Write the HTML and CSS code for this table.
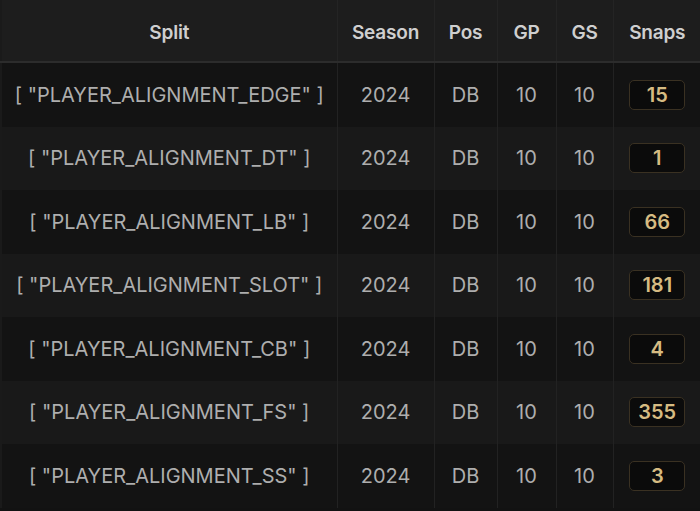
FILE: index.html
```html
<!DOCTYPE html>
<html>
<head>
<meta charset="utf-8">
<link rel="stylesheet" href="styles.css">
</head>
<body>
<table class="stats">
  <colgroup>
    <col class="c-split"><col class="c-season"><col class="c-pos"><col class="c-gp"><col class="c-gs"><col class="c-snaps">
  </colgroup>
  <thead>
    <tr><th>Split</th><th>Season</th><th>Pos</th><th>GP</th><th>GS</th><th>Snaps</th></tr>
  </thead>
  <tbody>
    <tr><td>[ "PLAYER_ALIGNMENT_EDGE" ]</td><td>2024</td><td>DB</td><td>10</td><td>10</td><td><span class="badge">15</span></td></tr>
    <tr><td>[ "PLAYER_ALIGNMENT_DT" ]</td><td>2024</td><td>DB</td><td>10</td><td>10</td><td><span class="badge">1</span></td></tr>
    <tr><td>[ "PLAYER_ALIGNMENT_LB" ]</td><td>2024</td><td>DB</td><td>10</td><td>10</td><td><span class="badge">66</span></td></tr>
    <tr><td>[ "PLAYER_ALIGNMENT_SLOT" ]</td><td>2024</td><td>DB</td><td>10</td><td>10</td><td><span class="badge">181</span></td></tr>
    <tr><td>[ "PLAYER_ALIGNMENT_CB" ]</td><td>2024</td><td>DB</td><td>10</td><td>10</td><td><span class="badge">4</span></td></tr>
    <tr><td>[ "PLAYER_ALIGNMENT_FS" ]</td><td>2024</td><td>DB</td><td>10</td><td>10</td><td><span class="badge">355</span></td></tr>
    <tr><td>[ "PLAYER_ALIGNMENT_SS" ]</td><td>2024</td><td>DB</td><td>10</td><td>10</td><td><span class="badge">3</span></td></tr>
  </tbody>
</table>
</body>
</html>
```

FILE: styles.css
```css
html, body {
  margin: 0;
  padding: 0;
  background: #121212;
}
.stats {
  width: 700px;
  border-collapse: collapse;
  table-layout: fixed;
  font-family: Inter, "Noto Sans", sans-serif;
  color: #aeaeae;
}
.c-split { width: 336px; }
.c-season { width: 97px; }
.c-pos { width: 63px; }
.c-gp { width: 59px; }
.c-gs { width: 57px; }
.c-snaps { width: 88px; }
.stats th {
  height: 58px;
  padding: 3px 0 0;
  background: #1d1d1d;
  color: #cfcfcf;
  font-size: 19px;
  font-weight: 600;
  letter-spacing: -0.2px;
  border-bottom: 2px solid #2c2c2c;
  border-right: 1px solid #242424;
}
.stats td {
  height: 63.5px;
  padding: 0;
  text-align: center;
  font-size: 20px;
  border-right: 1px solid #222;
}
.stats th:first-child, .stats td:first-child { border-left: 2px solid #1a1a1a; }
.stats th:last-child, .stats td:last-child { border-right: none; }
.stats tbody tr:nth-child(odd) { background: #131313; }
.stats tbody tr:nth-child(even) { background: #191919; }
.badge {
  display: inline-block;
  width: 56px;
  height: 30px;
  line-height: 28px;
  box-sizing: border-box;
  border: 1px solid #3a3122;
  border-radius: 5px;
  background: #0b0b0b;
  color: #d6bb82;
  font-weight: 600;
  font-size: 20px;
}
```
